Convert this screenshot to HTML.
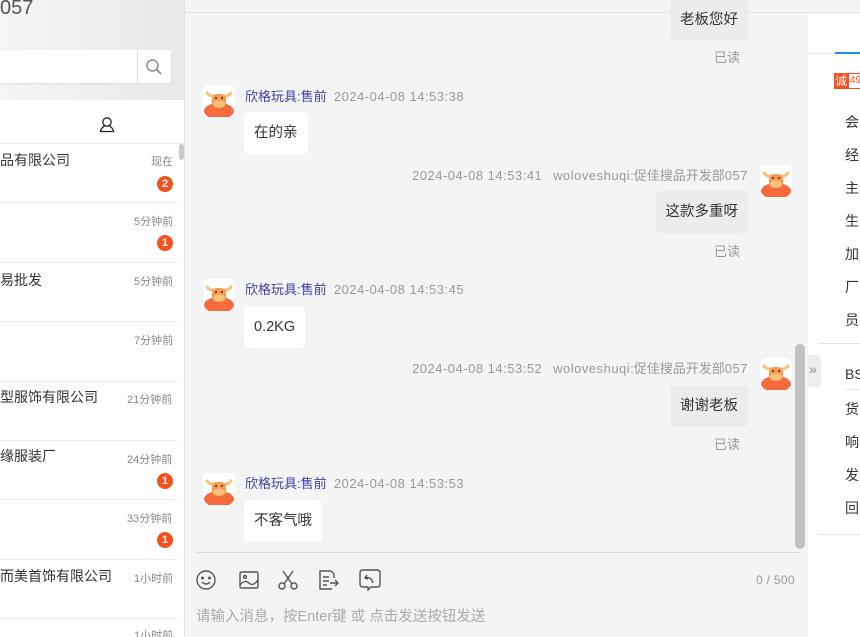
<!DOCTYPE html>
<html><head><meta charset="utf-8"><style>
*{margin:0;padding:0;box-sizing:border-box}
html,body{width:860px;height:637px;overflow:hidden}
body{position:relative;background:#f4f4f4;font-family:"Liberation Sans","Noto Sans CJK SC",sans-serif;}
.a{position:absolute}
.t{font-size:14px;color:#333;white-space:nowrap}
.tm{font-size:11px;color:#888;white-space:nowrap}
.bd{width:16px;height:16px;border-radius:50%;background:#f4511e;color:#fff;font-size:11px;font-weight:bold;text-align:center;line-height:16px}
.meta{font-size:13px;color:#999;white-space:nowrap}
.ts{letter-spacing:.5px}
.nm{color:#3b3fa8}
.bl{background:#fff;border-radius:5px;height:42px;font-size:14.5px;color:#333;line-height:42px;padding:0 10px;white-space:nowrap}
.br{background:#ececec;border-radius:5px;height:42px;font-size:14.5px;color:#333;line-height:42px;padding:0 10px;white-space:nowrap;right:112px}
.rd{font-size:13px;color:#999;right:120px}
.ri{font-size:14px;color:#333;left:845px}
</style></head><body>
<!-- left panel -->
<div class="a" style="left:0;top:0;width:184px;height:100px;background:linear-gradient(90deg,#f5f5f5,#e8e8e8)"></div>
<div class="a" style="left:0;top:-3px;font-size:20px;color:#555">057</div>
<div class="a" style="left:0;top:50px;width:171px;height:33px;background:#fff;border-radius:0 3px 3px 0;box-shadow:0 1px 2px #ddd"></div>
<div class="a" style="left:137px;top:50px;width:1px;height:33px;background:#ddd"></div>
<svg class="a" style="left:145px;top:58px" width="18" height="18" viewBox="0 0 18 18"><circle cx="7.5" cy="7.5" r="5.5" fill="none" stroke="#888" stroke-width="1.4"/><path d="M11.5 11.5L16 16" stroke="#888" stroke-width="1.6"/></svg>
<div class="a" style="left:0;top:100px;width:184px;height:537px;background:#fff"></div>
<svg class="a" style="left:99px;top:116px" width="16" height="18" viewBox="0 0 16 18"><circle cx="8" cy="6" r="4.2" fill="none" stroke="#222" stroke-width="1.3"/><path d="M5.5 9.5C5 11 1.5 12 1.5 15.5h13C14.5 12 11 11 10.5 9.5" fill="none" stroke="#222" stroke-width="1.3"/></svg>
<div class="a" style="left:0;top:143px;width:184px;height:1px;background:#eee"></div>
<div class="a" style="left:179px;top:144px;width:5px;height:16px;background:#ccc;border-radius:3px"></div>
<div class="a t" style="left:0;top:150px">品有限公司</div><div class="a tm" style="left:151px;top:153px">现在</div><div class="a bd" style="left:157px;top:176px">2</div>
<div class="a" style="left:0;top:202px;width:178px;height:1px;background:#eee"></div>
<div class="a tm" style="left:134px;top:213px">5分钟前</div><div class="a bd" style="left:157px;top:235px">1</div>
<div class="a" style="left:0;top:262px;width:178px;height:1px;background:#eee"></div>
<div class="a t" style="left:0;top:270px">易批发</div><div class="a tm" style="left:134px;top:273px">5分钟前</div>
<div class="a" style="left:0;top:321px;width:178px;height:1px;background:#eee"></div>
<div class="a tm" style="left:134px;top:332px">7分钟前</div>
<div class="a" style="left:0;top:381px;width:178px;height:1px;background:#eee"></div>
<div class="a t" style="left:0;top:387px">型服饰有限公司</div><div class="a tm" style="left:127px;top:391px">21分钟前</div>
<div class="a" style="left:0;top:440px;width:178px;height:1px;background:#eee"></div>
<div class="a t" style="left:0;top:446px">缘服装厂</div><div class="a tm" style="left:127px;top:451px">24分钟前</div><div class="a bd" style="left:157px;top:473px">1</div>
<div class="a" style="left:0;top:499px;width:178px;height:1px;background:#eee"></div>
<div class="a tm" style="left:127px;top:510px">33分钟前</div><div class="a bd" style="left:157px;top:532px">1</div>
<div class="a" style="left:0;top:559px;width:178px;height:1px;background:#eee"></div>
<div class="a t" style="left:0;top:566px">而美首饰有限公司</div><div class="a tm" style="left:134px;top:570px">1小时前</div>
<div class="a" style="left:0;top:618px;width:178px;height:1px;background:#eee"></div>
<div class="a tm" style="left:134px;top:627px">1小时前</div>
<div class="a" style="left:184px;top:0;width:1px;height:637px;background:#e2e2e2"></div>
<!-- top bar -->
<div class="a" style="left:185px;top:0;width:675px;height:13px;background:#f4f4f4;border-bottom:1px solid #e3e3e3"></div>
<!-- avatars -->
<svg width="0" height="0" style="position:absolute"><defs><g id="cow"><rect width="32" height="32" rx="5" fill="#fff"/><path d="M4 8q2 3 6 3M28 8q-2 3-6 3" stroke="#f8c27a" stroke-width="3" fill="none" stroke-linecap="round"/><ellipse cx="16" cy="26" rx="15" ry="8" fill="#f56b3d"/><rect x="9" y="9" width="14" height="14" rx="5" fill="#f59a4f"/><ellipse cx="16" cy="19" rx="6" ry="3.5" fill="#f8c27a"/><circle cx="13" cy="13" r="1" fill="#522"/><circle cx="19" cy="13" r="1" fill="#522"/></g></defs></svg>
<svg class="a" style="left:203px;top:85px" width="32" height="32"><use href="#cow"/></svg>
<svg class="a" style="left:760px;top:165px" width="32" height="32"><use href="#cow"/></svg>
<svg class="a" style="left:203px;top:279px" width="32" height="32"><use href="#cow"/></svg>
<svg class="a" style="left:760px;top:358px" width="32" height="32"><use href="#cow"/></svg>
<svg class="a" style="left:203px;top:473px" width="32" height="32"><use href="#cow"/></svg>
<!-- messages -->
<div class="a br" style="top:0;height:40px;line-height:40px;border-radius:0 0 5px 5px">老板您好</div>
<div class="a rd" style="top:47px">已读</div>
<div class="a meta" style="left:245px;top:86px"><span class="nm">欣格玩具:售前</span>&nbsp;&nbsp;<span class="ts">2024-04-08 14:53:38</span></div>
<div class="a bl" style="left:244px;top:112px">在的亲</div>
<div class="a meta" style="right:112px;top:165px"><span class="ts">2024-04-08 14:53:41</span>&nbsp;&nbsp;&nbsp;<span class="ts">woloveshuqi</span>:促佳搜品开发部<span class="ts">057</span></div>
<div class="a br" style="top:191px">这款多重呀</div>
<div class="a rd" style="top:241px">已读</div>
<div class="a meta" style="left:245px;top:279px"><span class="nm">欣格玩具:售前</span>&nbsp;&nbsp;<span class="ts">2024-04-08 14:53:45</span></div>
<div class="a bl" style="left:244px;top:306px">0.2KG</div>
<div class="a meta" style="right:112px;top:358px"><span class="ts">2024-04-08 14:53:52</span>&nbsp;&nbsp;&nbsp;<span class="ts">woloveshuqi</span>:促佳搜品开发部<span class="ts">057</span></div>
<div class="a br" style="top:385px">谢谢老板</div>
<div class="a rd" style="top:434px">已读</div>
<div class="a meta" style="left:245px;top:473px"><span class="nm">欣格玩具:售前</span>&nbsp;&nbsp;<span class="ts">2024-04-08 14:53:53</span></div>
<div class="a bl" style="left:244px;top:500px">不客气哦</div>
<!-- scrollbar -->
<div class="a" style="left:795px;top:344px;width:10px;height:205px;background:#c2c2c2;border-radius:5px"></div>
<div class="a" style="left:196px;top:552px;width:604px;height:1px;background:#ddd"></div>
<!-- toolbar -->
<svg class="a" style="left:195px;top:569px" width="22" height="22" viewBox="0 0 22 22" fill="none" stroke="#555" stroke-width="1.4"><circle cx="11" cy="11" r="9"/><circle cx="7.5" cy="9" r=".8" fill="#555"/><circle cx="14.5" cy="9" r=".8" fill="#555"/><path d="M7 13q4 4 8 0"/></svg>
<svg class="a" style="left:239px;top:571px" width="20" height="18" viewBox="0 0 20 18" fill="none" stroke="#555" stroke-width="1.4"><rect x="1" y="1" width="18" height="16" rx="1.5"/><circle cx="6" cy="6" r="1.5"/><path d="M1 14q5-6 9-2t9-3"/></svg>
<svg class="a" style="left:277px;top:569px" width="22" height="22" viewBox="0 0 22 22" fill="none" stroke="#555" stroke-width="1.4"><circle cx="5" cy="17" r="3"/><circle cx="17" cy="17" r="3"/><path d="M7 15L16 2M15 15L6 2"/></svg>
<svg class="a" style="left:318px;top:570px" width="22" height="20" viewBox="0 0 22 20" fill="none" stroke="#555" stroke-width="1.4"><path d="M13 1H2v18h12M13 1l3 3v4"/><path d="M5 7h6M5 11h6M5 15h4M12 13h8M17 10l3 3-3 3"/></svg>
<svg class="a" style="left:359px;top:569px" width="22" height="22" viewBox="0 0 22 22" fill="none" stroke="#555" stroke-width="1.4"><path d="M4 1h14q3 0 3 3v11q0 3-3 3h-6l-3 3v-3H4q-3 0-3-3V4q0-3 3-3z"/><path d="M8 6l-2 3 3 1M6 9q6-2 8 5"/></svg>
<div class="a" style="left:756px;top:573px;font-size:12px;color:#999;letter-spacing:.3px">0 / 500</div>
<div class="a" style="left:196px;top:605px;font-size:14.5px;color:#aaa;white-space:nowrap">请输入消息，按Enter键 或 点击发送按钮发送</div>
<!-- right panel -->
<div class="a" style="left:808px;top:13px;width:52px;height:624px;background:#fff"></div>
<div class="a" style="left:808px;top:53px;width:52px;height:1px;background:#e6e6e6"></div>
<div class="a" style="left:835px;top:52px;width:25px;height:2px;background:#1890ff"></div>
<div class="a" style="left:834px;top:73px;width:14px;height:16px;background:#f4511e;color:#fff;font-size:12px;line-height:16px;text-align:center">诚</div>
<div class="a" style="left:848px;top:73px;width:12px;height:16px;border:1px solid #f4511e;border-right:none;color:#f4511e;font-size:10px;line-height:14px;padding-left:1px;overflow:hidden">49</div>
<div class="a ri" style="top:112px">会</div>
<div class="a ri" style="top:145px">经</div>
<div class="a ri" style="top:178px">主</div>
<div class="a ri" style="top:211px">生</div>
<div class="a ri" style="top:244px">加</div>
<div class="a ri" style="top:277px">厂</div>
<div class="a ri" style="top:310px">员</div>
<div class="a" style="left:818px;top:343px;width:42px;height:1px;background:#e6e6e6"></div>
<div class="a" style="left:807px;top:355px;width:14px;height:32px;background:#eee;border-radius:0 4px 4px 0"></div>
<div class="a" style="left:809px;top:361px;font-size:14px;color:#888">»</div>
<div class="a ri" style="top:366px">BS</div>
<div class="a" style="left:845px;top:389px;width:15px;height:1px;background:#e6e6e6"></div>
<div class="a ri" style="top:399px">货</div>
<div class="a ri" style="top:432px">响</div>
<div class="a ri" style="top:465px">发</div>
<div class="a ri" style="top:498px">回</div>
<div class="a" style="left:818px;top:534px;width:42px;height:1px;background:#e6e6e6"></div>
</body></html>
